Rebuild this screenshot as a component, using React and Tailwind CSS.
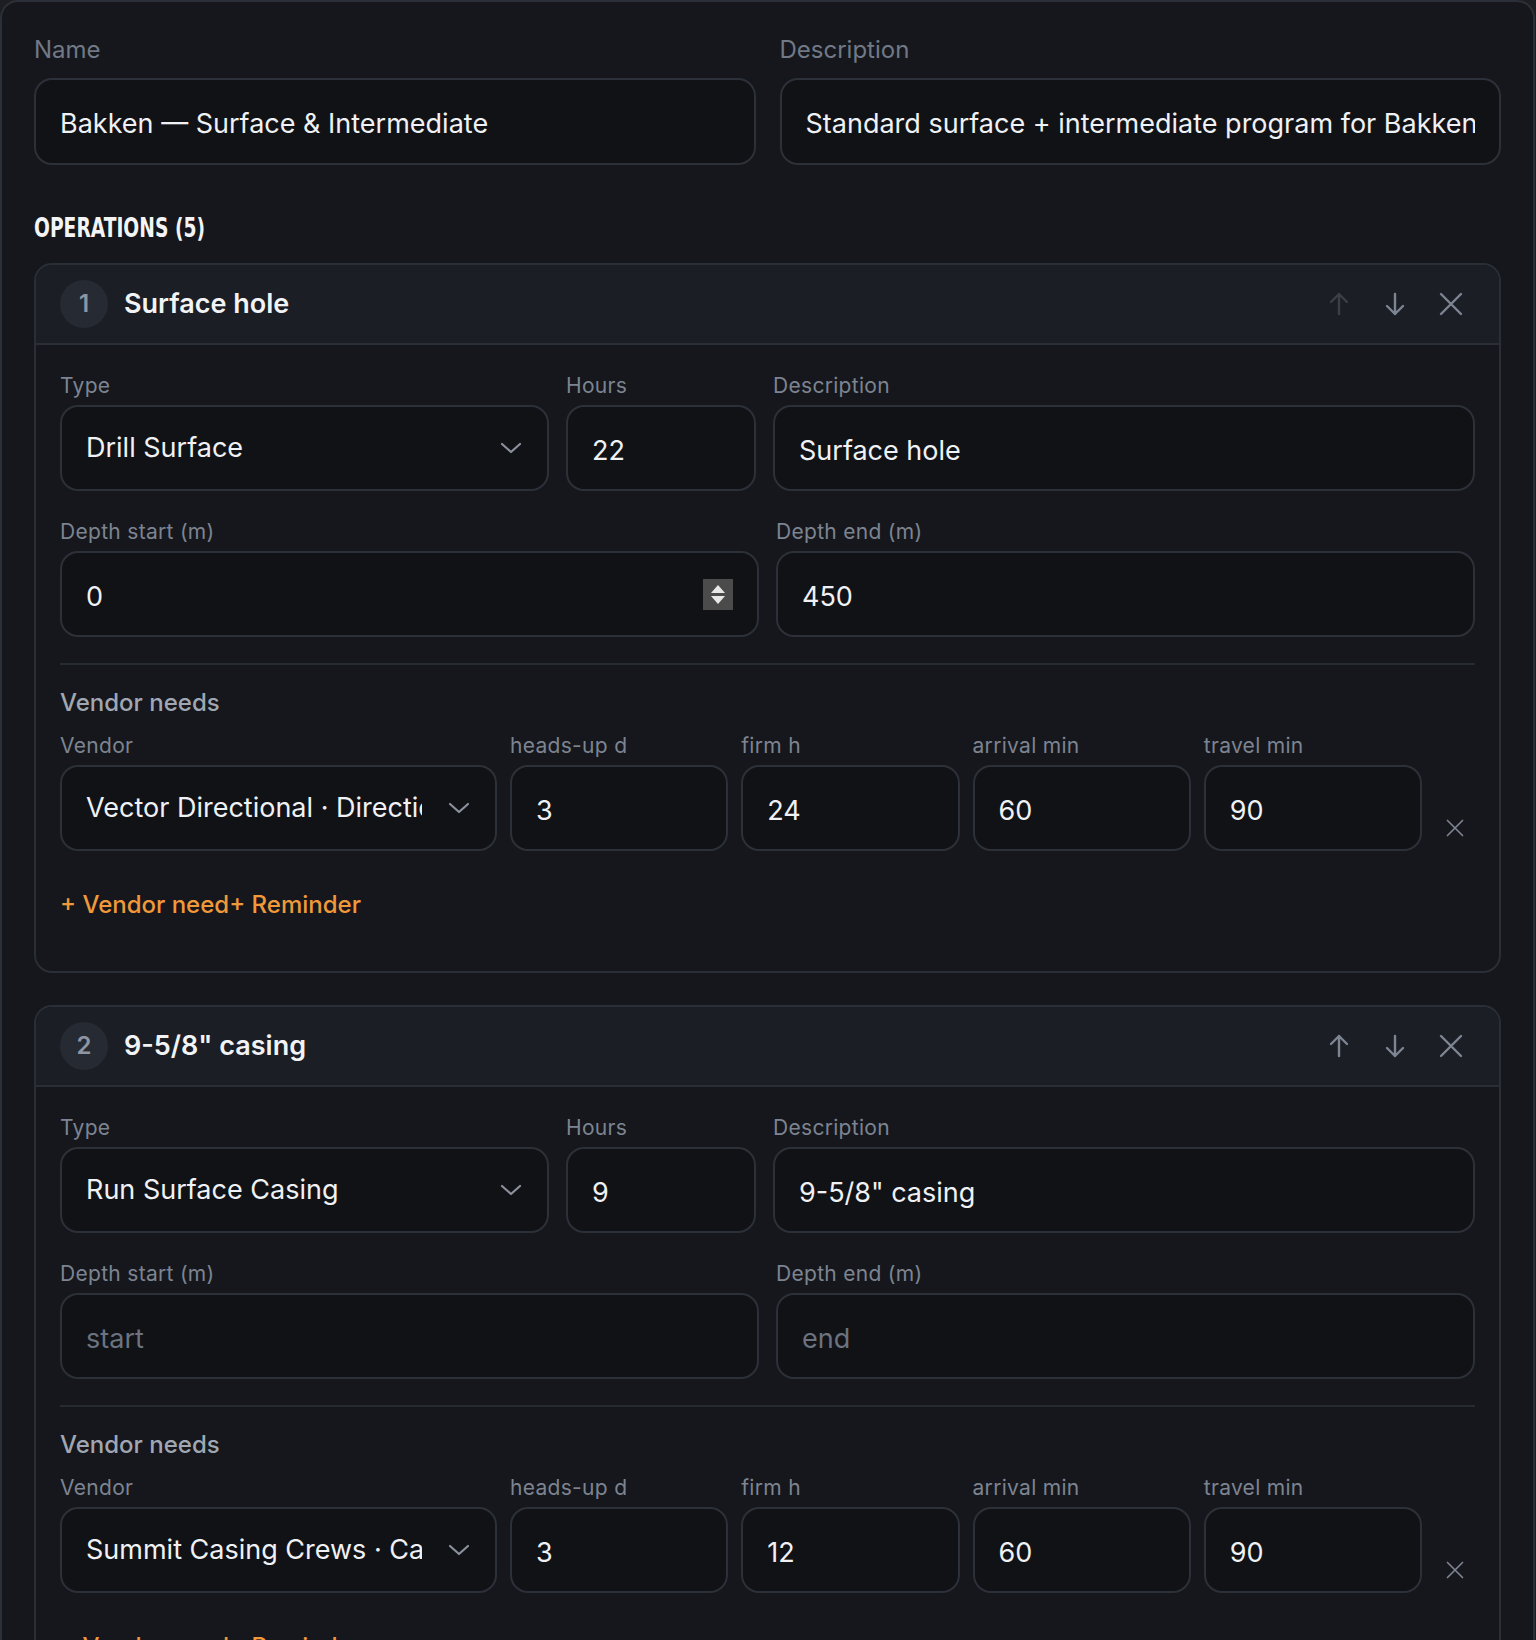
import React from 'react';

const operations = [
  {
    title: 'Surface hole',
    type: 'Drill Surface',
    hours: '22',
    description: 'Surface hole',
    depthStart: '0',
    depthEnd: '450',
    vendors: [{ name: 'Vector Directional · Directional Drilling', headsUp: '3', firm: '24', arrival: '60', travel: '90' }],
  },
  {
    title: '9-5/8" casing',
    type: 'Run Surface Casing',
    hours: '9',
    description: '9-5/8" casing',
    depthStart: '',
    depthEnd: '',
    vendors: [{ name: 'Summit Casing Crews · Casing', headsUp: '3', firm: '12', arrival: '60', travel: '90' }],
  },
  {
    title: 'Intermediate hole',
    type: 'Drill Intermediate',
    hours: '60',
    description: 'Intermediate hole',
    depthStart: '450',
    depthEnd: '3200',
    vendors: [],
  },
  {
    title: '7" casing',
    type: 'Run Intermediate Casing',
    hours: '14',
    description: '7" casing',
    depthStart: '',
    depthEnd: '',
    vendors: [],
  },
  {
    title: 'Cement intermediate',
    type: 'Cement',
    hours: '8',
    description: 'Cement intermediate',
    depthStart: '',
    depthEnd: '',
    vendors: [],
  },
];

function Chevron() {
  return (
    <svg width="22" height="12" viewBox="0 0 22 12" fill="none" className="shrink-0">
      <path d="M2 2 L11 10 L20 2" stroke="#8a919c" strokeWidth="2.2" strokeLinecap="round" strokeLinejoin="round" />
    </svg>
  );
}

function ArrowIcon({ down, color }) {
  return (
    <svg width="20" height="24" viewBox="0 0 20 24" fill="none">
      {down ? (
        <path d="M10 2 V22 M2 14 L10 22 L18 14" stroke={color} strokeWidth="2.4" strokeLinecap="round" strokeLinejoin="round" />
      ) : (
        <path d="M10 22 V2 M2 10 L10 2 L18 10" stroke={color} strokeWidth="2.4" strokeLinecap="round" strokeLinejoin="round" />
      )}
    </svg>
  );
}

function CloseIcon({ size = 24, color = '#7d8593', stroke = 2.4 }) {
  return (
    <svg width={size} height={size} viewBox="0 0 24 24" fill="none">
      <path d="M2 2 L22 22 M22 2 L2 22" stroke={color} strokeWidth={stroke} strokeLinecap="round" />
    </svg>
  );
}

function Spinner() {
  return (
    <div className="w-[30px] h-[31px] bg-[#4b4b4b] flex flex-col items-center justify-center gap-[3px] shrink-0">
      <svg width="14" height="8" viewBox="0 0 14 8"><path d="M7 0 L14 8 L0 8 Z" fill="#e8e8e8" /></svg>
      <svg width="14" height="8" viewBox="0 0 14 8"><path d="M0 0 L14 0 L7 8 Z" fill="#e8e8e8" /></svg>
    </div>
  );
}

function FieldLabel({ children }) {
  return <div className="text-[21px] leading-[28px] tracking-[0.3px] text-[#7d8491] mb-[5px] whitespace-nowrap">{children}</div>;
}

function TextBox({ value, placeholder, spinner, tall }) {
  return (
    <div className={`${tall ? 'h-[87px]' : 'h-[86px]'} rounded-[18px] border-2 border-[#2c3038] bg-[#111216] px-6 flex items-center`}>
      <span className={`flex-1 min-w-0 overflow-hidden whitespace-nowrap pt-[5px] text-[27px] leading-[34px] ${value ? 'text-[#eff1f4]' : 'text-[#6b7280]'}`}>
        {value || placeholder}
      </span>
      {spinner && <Spinner />}
    </div>
  );
}

function SelectBox({ value }) {
  return (
    <div className="h-[86px] rounded-[18px] border-2 border-[#2c3038] bg-[#111216] pl-6 pr-[25px] flex items-center">
      <span className="flex-1 min-w-0 overflow-hidden whitespace-nowrap mr-[26px] text-[27px] leading-[34px] text-[#eff1f4]">{value}</span>
      <Chevron />
    </div>
  );
}

function OperationCard({ op, index, total }) {
  const first = index === 0;
  const last = index === total - 1;
  return (
    <div className="rounded-[18px] border-2 border-[#2a2e36] overflow-hidden">
      {/* Header */}
      <div className="h-[80px] px-6 flex items-center bg-[#1b1e25] border-b-2 border-[#2a2e36]">
        <div className="w-12 h-12 rounded-full bg-[#262a33] flex items-center justify-center text-[24px] font-semibold text-[#8e96a3]">
          {index + 1}
        </div>
        <div className="ml-4 text-[27px] font-semibold text-[#f1f3f5]">{op.title}</div>
        <div className="ml-auto flex gap-2">
          <button className="w-12 h-12 flex items-center justify-center">
            <ArrowIcon color={first ? '#3a3f48' : '#7d8593'} />
          </button>
          <button className="w-12 h-12 flex items-center justify-center">
            <ArrowIcon down color={last ? '#3a3f48' : '#7d8593'} />
          </button>
          <button className="w-12 h-12 flex items-center justify-center">
            <CloseIcon />
          </button>
        </div>
      </div>

      {/* Body */}
      <div className="pt-[27px] pb-[50px] px-6">
        <div className="grid grid-cols-[489px_190px_1fr] gap-x-[17px]">
          <div>
            <FieldLabel>Type</FieldLabel>
            <SelectBox value={op.type} />
          </div>
          <div>
            <FieldLabel>Hours</FieldLabel>
            <TextBox value={op.hours} />
          </div>
          <div>
            <FieldLabel>Description</FieldLabel>
            <TextBox value={op.description} />
          </div>
        </div>

        <div className="grid grid-cols-2 gap-x-[17px] mt-[27px]">
          <div>
            <FieldLabel>Depth start (m)</FieldLabel>
            <TextBox value={op.depthStart} placeholder="start" spinner={first} />
          </div>
          <div>
            <FieldLabel>Depth end (m)</FieldLabel>
            <TextBox value={op.depthEnd} placeholder="end" />
          </div>
        </div>

        <div className="mt-[26px] h-[2px] bg-[#262a31]" />

        <div className="pt-[22px] text-[24px] leading-[32px] font-medium text-[#a1a7b2]">Vendor needs</div>

        {op.vendors.map((v, i) => (
          <div key={i} className="mt-[13px] grid grid-cols-[437px_1fr_1fr_1fr_1fr_40px] gap-x-[13px]">
            <div className="min-w-0">
              <FieldLabel>Vendor</FieldLabel>
              <SelectBox value={v.name} />
            </div>
            <div className="min-w-0">
              <FieldLabel>heads-up d</FieldLabel>
              <TextBox value={v.headsUp} />
            </div>
            <div className="min-w-0">
              <FieldLabel>firm h</FieldLabel>
              <TextBox value={v.firm} />
            </div>
            <div className="min-w-0">
              <FieldLabel>arrival min</FieldLabel>
              <TextBox value={v.arrival} />
            </div>
            <div className="min-w-0">
              <FieldLabel>travel min</FieldLabel>
              <TextBox value={v.travel} />
            </div>
            <div className="flex items-end justify-center pb-[14px]">
              <button className="flex items-center justify-center">
                <CloseIcon size={18} color="#7d8593" stroke={2.2} />
              </button>
            </div>
          </div>
        ))}

        <div className="mt-[38px] flex text-[24px] leading-[32px] font-medium text-[#f0993a]">
          <button>+ Vendor need</button>
          <button>+ Reminder</button>
        </div>
      </div>
    </div>
  );
}

export default function App() {
  return (
    <div className="min-h-screen bg-[#1c1e23] font-['Inter','Noto_Sans',sans-serif]">
      <div className="w-[1535px] min-h-[1700px] rounded-[18px] border-2 border-[#2b2f37] bg-[#15171c] px-8 pt-8 pb-8">
        {/* Name / Description */}
        <div className="grid grid-cols-2 gap-x-6">
          <div>
            <div className="text-[24px] leading-[32px] text-[#717987] mb-3">Name</div>
            <TextBox value="Bakken — Surface & Intermediate" tall />
          </div>
          <div>
            <div className="text-[24px] leading-[32px] text-[#717987] mb-3">Description</div>
            <TextBox value="Standard surface + intermediate program for Bakken wells with directional surface hole" tall />
          </div>
        </div>

        <h2 className="mt-[47px] mb-[19px] text-[27px] leading-[32px] font-bold uppercase text-[#f3f4f6] font-['DejaVu_Sans_Condensed','DejaVu_Sans',sans-serif]">
          <span className="inline-block origin-left scale-x-[0.77] whitespace-nowrap">Operations ({operations.length})</span>
        </h2>

        <div className="flex flex-col gap-[32px]">
          {operations.map((op, i) => (
            <OperationCard key={i} op={op} index={i} total={operations.length} />
          ))}
        </div>
      </div>
    </div>
  );
}
